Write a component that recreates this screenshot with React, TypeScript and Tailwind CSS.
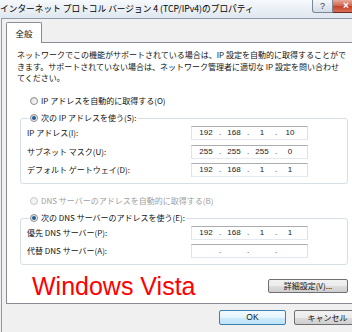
import React from 'react';

function Radio({ checked, disabled }: { checked?: boolean; disabled?: boolean }) {
  return (
    <span
      className={
        disabled
          ? 'flex h-[8px] w-[8px] shrink-0 items-center justify-center rounded-full border border-[#c8c8c8] bg-[#f3f3f3]'
          : 'flex h-[8px] w-[8px] shrink-0 items-center justify-center rounded-full border border-[#8a8a8a] bg-gradient-to-br from-[#dcdcdc] to-[#ffffff]'
      }
    >
      {checked && <span className="h-[4px] w-[4px] rounded-full bg-[#1f5d92]" />}
    </span>
  );
}

function IpBox({ parts }: { parts: string[] }) {
  return (
    <div className="flex h-[14px] w-[117px] items-center border border-[#abadb3] border-b-[#e3e9ef] border-l-[#e2e3ea] border-r-[#dbdfe6] bg-white pl-[2px] font-['Liberation_Sans',sans-serif] text-[8px] leading-[12px] text-[#1a1a1a]">
      {parts.map((p, i) => (
        <React.Fragment key={i}>
          <span className="w-[24px] text-center">{p}</span>
          {i < 3 && <span className="w-[4px] text-center">.</span>}
        </React.Fragment>
      ))}
    </div>
  );
}

function Row({ label, parts, className }: { label: string; parts: string[]; className?: string }) {
  return (
    <div className={`flex h-[14px] items-center ${className ?? ''}`}>
      <span className="w-[164px] whitespace-nowrap">{label}</span>
      <IpBox parts={parts} />
    </div>
  );
}

const grayBtn =
  'flex items-center justify-center rounded-[2px] border border-[#707070] bg-[linear-gradient(#f2f2f2_0%,#ebebeb_50%,#dddddd_50%,#cfcfcf_100%)] whitespace-nowrap';

export default function App() {
  return (
    <div className="h-[332px] w-[352px] overflow-hidden bg-[#f0f0f0] font-['Noto_Sans_CJK_JP','Noto_Sans',sans-serif] text-[8px] text-[#111]">
      {/* title bar */}
      <div className="flex h-[18px] w-[360px] items-start bg-gradient-to-b from-[#f6f9fc] to-[#dfe7ef]">
        <div className="min-w-0 flex-1 overflow-hidden whitespace-nowrap pt-[2px] text-[8.7px] leading-[13px] text-black">
          インターネット プロトコル バージョン 4 (TCP/IPv4)のプロパティ
        </div>
        <div className="flex h-[13px] w-[21px] shrink-0 items-center justify-center rounded-bl-[3px] border border-t-0 border-[#7a8797] bg-gradient-to-b from-[#f4f7fa] to-[#d3dce6] font-['Liberation_Sans',sans-serif] text-[9px] leading-none text-[#3a3a3a]">
          ?
        </div>
        <div className="flex h-[13px] w-[27px] shrink-0 items-center justify-center rounded-br-[3px] border border-t-0 border-l-0 border-[#6d2c22] bg-[linear-gradient(#e9a99b,#d0614c_50%,#c4402a_50%,#d76d55)] font-['Liberation_Sans',sans-serif] text-[10px] font-bold leading-none text-white">
          ×
        </div>
      </div>

      {/* client area */}
      <div className="ml-[1px] h-[314px] border-l border-t border-[#8e9aa8]">
        <div className="pl-[4px] pt-[3px]">
          <div className="relative z-10 -mb-px flex h-[21px] w-[36px] items-center justify-center rounded-t-[2px] border border-b-0 border-[#898c95] bg-white text-[8.5px]">
            全般
          </div>
        </div>

        <div className="ml-[4px] h-[262px] w-[352px] border border-[#898c95] bg-white">
          <p className="whitespace-nowrap pl-[10px] pt-[6px] leading-[11.5px]">
            ネットワークでこの機能がサポートされている場合は、IP 設定を自動的に取得することがで
            <br />
            きます。サポートされていない場合は、ネットワーク管理者に適切な IP 設定を問い合わせ
            <br />
            てください。
          </p>

          <div className="mt-[11.5px] flex h-[12px] items-center gap-[3px] pl-[23px]">
            <Radio />
            <span className="whitespace-nowrap">IP アドレスを自動的に取得する(O)</span>
          </div>

          <fieldset className="ml-[13px] mt-[5px] w-[328px] rounded-[3px] border border-[#d5dfe5] pb-[6px] pl-[6px] pt-[2px]">
            <legend className="ml-[2px] px-[1px]">
              <span className="flex h-[12px] items-center gap-[3px]">
                <Radio checked />
                <span className="whitespace-nowrap">次の IP アドレスを使う(S):</span>
              </span>
            </legend>
            <Row label="IP アドレス(I):" parts={['192', '168', '1', '10']} />
            <Row className="mt-[5px]" label="サブネット マスク(U):" parts={['255', '255', '255', '0']} />
            <Row className="mt-[4px]" label="デフォルト ゲートウェイ(D):" parts={['192', '168', '1', '1']} />
          </fieldset>

          <div className="mt-[11px] flex h-[12px] items-center gap-[3px] pl-[23px] text-[#a0a0a0]">
            <Radio disabled />
            <span className="whitespace-nowrap">DNS サーバーのアドレスを自動的に取得する(B)</span>
          </div>

          <fieldset className="ml-[13px] mt-[5px] w-[328px] rounded-[3px] border border-[#d5dfe5] pb-[6px] pl-[6px] pt-[2px]">
            <legend className="ml-[2px] px-[1px]">
              <span className="flex h-[12px] items-center gap-[3px]">
                <Radio checked />
                <span className="whitespace-nowrap">次の DNS サーバーのアドレスを使う(E):</span>
              </span>
            </legend>
            <Row label="優先 DNS サーバー(P):" parts={['192', '168', '1', '1']} />
            <Row className="mt-[4px]" label="代替 DNS サーバー(A):" parts={['', '', '', '']} />
          </fieldset>

          <div className="mt-[9px] flex items-start">
            <span className="ml-[25px] whitespace-nowrap font-['Liberation_Sans',sans-serif] text-[25px] leading-[25px] text-[#ff0000]">
              Windows Vista
            </span>
            <div className={`ml-auto mr-[9px] mt-[5px] h-[14px] w-[80px] ${grayBtn}`}>詳細設定(V)...</div>
          </div>
        </div>

        <div className="mt-[6px] flex gap-[8px] pl-[217px]">
          <div className="flex h-[15px] w-[67px] shrink-0 items-center justify-center rounded-[2px] border border-[#3c7fb1] bg-[linear-gradient(#f2fafe_0%,#e3f4fd_50%,#cdebfb_50%,#bde3f8_100%)] font-['Liberation_Sans',sans-serif] text-[8.5px]">
            OK
          </div>
          <div className={`h-[15px] w-[67px] shrink-0 ${grayBtn}`}>キャンセル</div>
        </div>
      </div>
    </div>
  );
}
